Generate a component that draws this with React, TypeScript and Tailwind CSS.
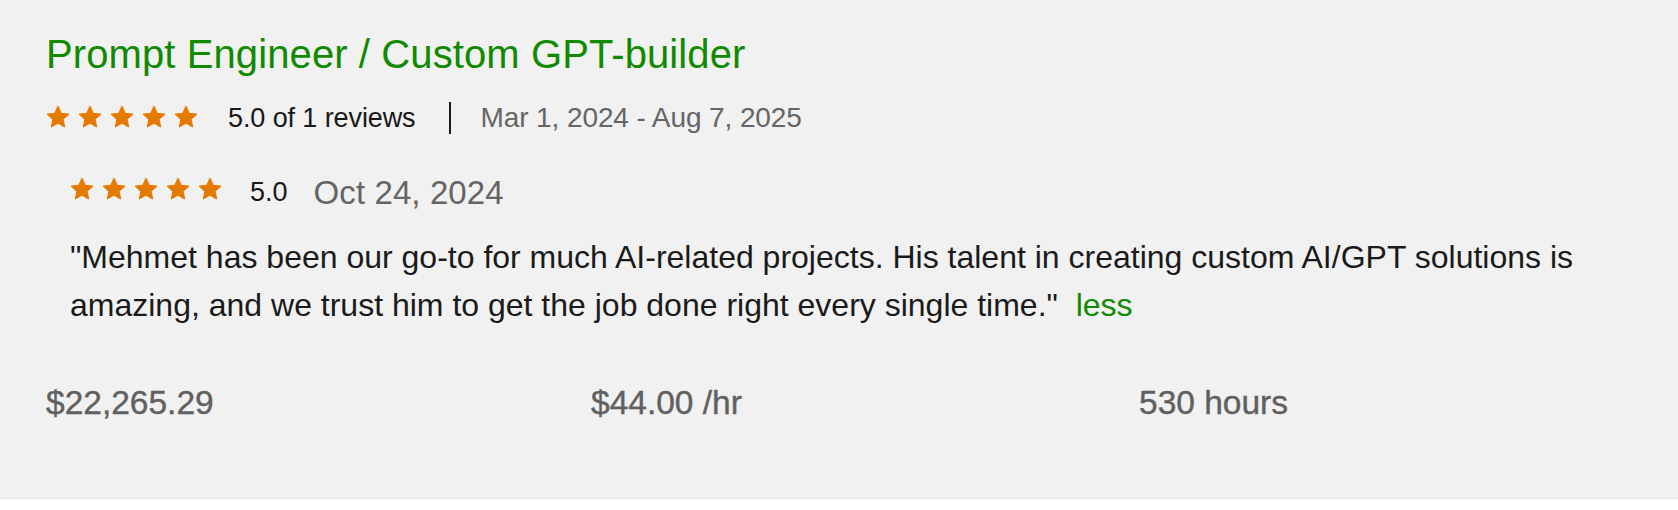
import React from "react";

const Star = () => (
  <svg width="24" height="24" viewBox="0 0 24 24" className="shrink-0">
    <polygon
      points="12,1.6 15.1,8.4 22.5,9.2 16.9,14.2 18.5,21.6 12,17.8 5.5,21.6 7.1,14.2 1.5,9.2 8.9,8.4"
      fill="#e57a00"
      stroke="#e57a00"
      strokeWidth="1.4"
      strokeLinejoin="round"
    />
  </svg>
);

const Stars = ({ className = "" }: { className?: string }) => (
  <div className={`flex items-center gap-[8px] ${className}`}>
    <Star />
    <Star />
    <Star />
    <Star />
    <Star />
  </div>
);

export default function App() {
  return (
    <div className="w-[1678px] bg-white font-['Liberation_Sans',Arial,sans-serif]">
      <div className="h-[499px] bg-[#f1f1f1] border-b border-[#e3e3e3] pl-[46px] pr-[46px] pt-[30px] flex flex-col">
        <h2 className="text-[40px] leading-[48px] text-[#108a00] font-normal whitespace-nowrap tracking-[0.1px]">
          Prompt Engineer / Custom GPT-builder
        </h2>

        <div className="mt-[24px] h-[32px] flex items-center">
          <Stars className="mb-[3px]" />
          <span className="ml-[30px] text-[27px] leading-none text-[#181818] tracking-[-0.1px]">
            5.0 of 1 reviews
          </span>
          <span className="ml-[33px] w-[2px] h-[32px] bg-[#1c1c1c]" />
          <span className="ml-[30px] text-[28px] leading-none text-[#656565] tracking-[-0.1px]">
            Mar 1, 2024 - Aug 7, 2025
          </span>
        </div>

        <div className="mt-[38px] ml-[24px] h-[40px] flex items-center">
          <Stars className="mb-[7px]" />
          <span className="ml-[28px] text-[27px] leading-none text-[#181818]">5.0</span>
          <span className="ml-[26px] text-[33px] leading-none text-[#656565] tracking-[0.1px]">Oct 24, 2024</span>
        </div>

        <p className="mt-[21px] ml-[24px] text-[32px] leading-[48px] text-[#1a1a1a]">
          "Mehmet has been our go-to for much AI-related projects. His talent in creating custom AI/GPT
          solutions is amazing, and we trust him to get the job done right every single time."{"\u00a0 "}
          <span className="text-[#108a00]">less</span>
        </p>

        <div className="mt-[50px] grid grid-cols-[545px_548px_1fr] text-[33.5px] leading-[48px] text-[#606060] [-webkit-text-stroke:0.4px_#606060]">
          <div>$22,265.29</div>
          <div>$44.00 /hr</div>
          <div>530 hours</div>
        </div>
      </div>
      <div className="h-[11px] bg-white" />
    </div>
  );
}
